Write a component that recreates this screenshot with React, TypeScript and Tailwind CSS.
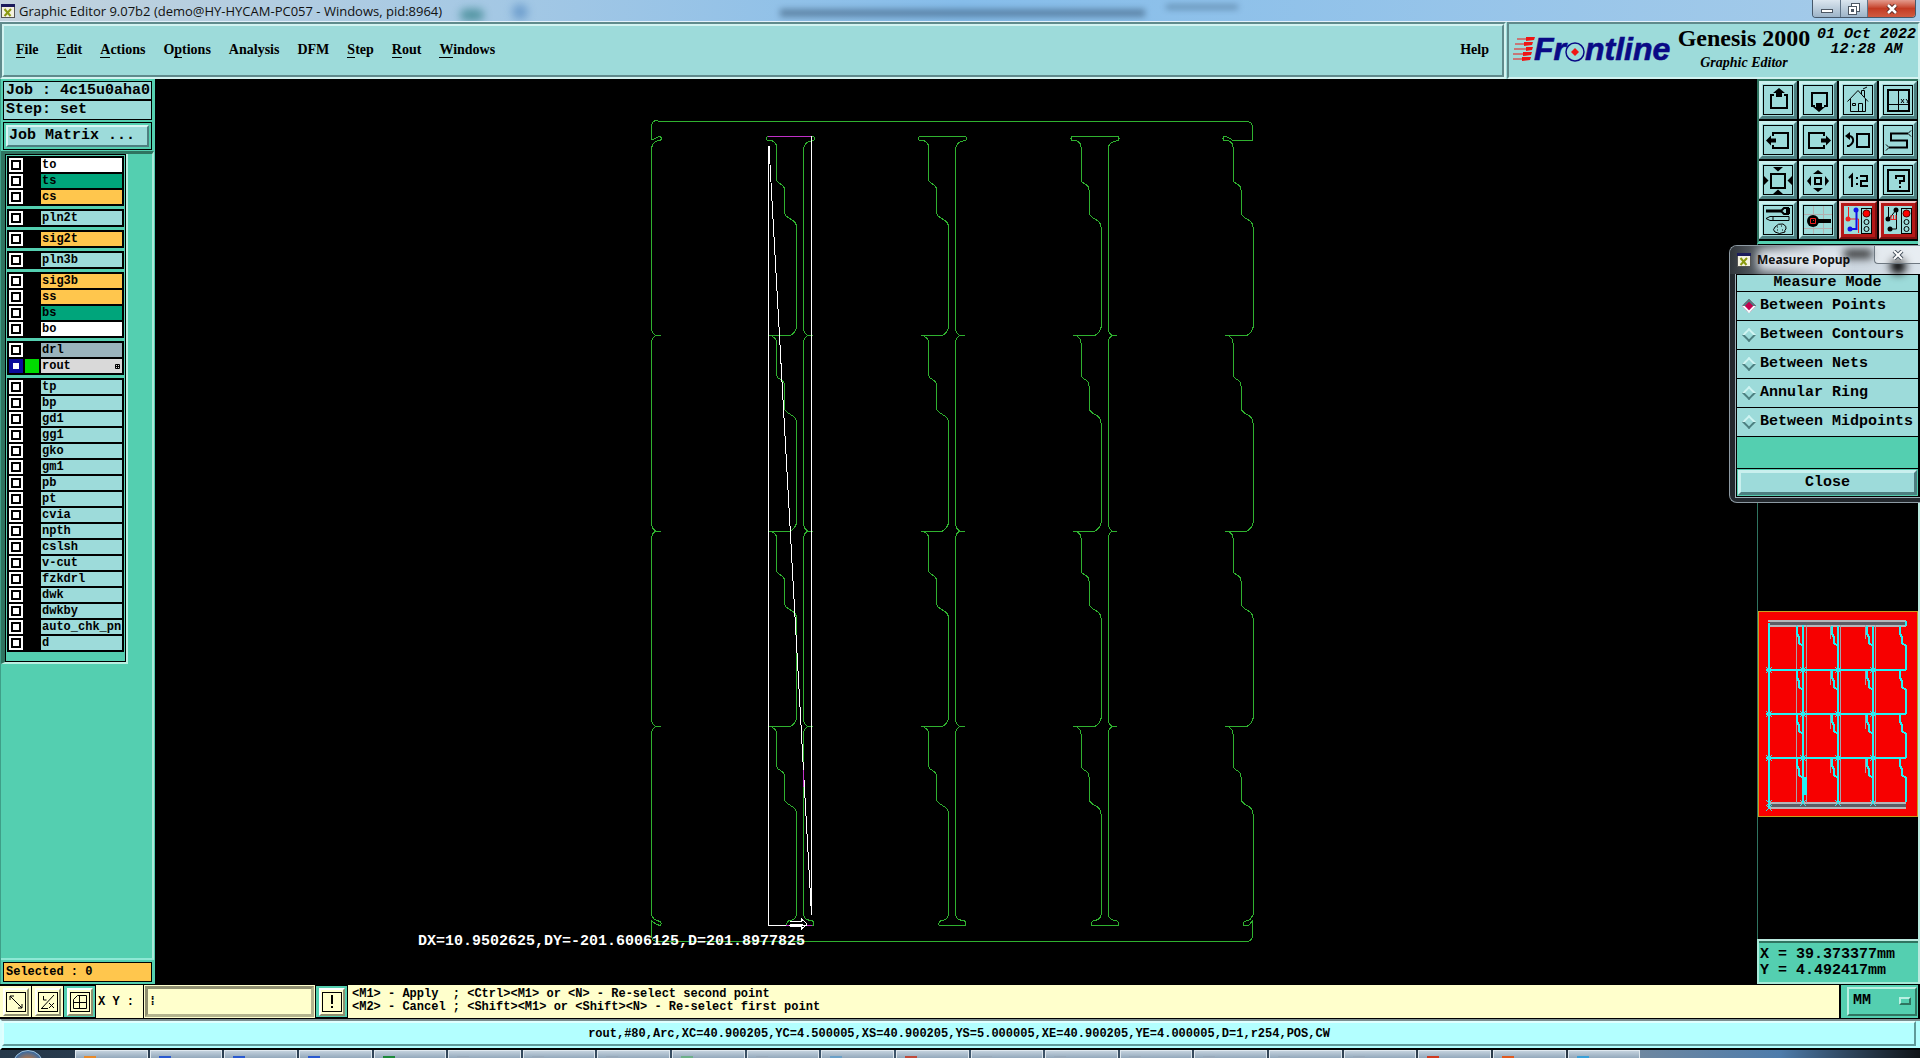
import React, { useState } from 'react';
import clsx from 'clsx';

type Layer = { name: string; color: string; active?: boolean };

const CYAN = 'bg-[#9ddbda]';
const ORANGE = 'bg-[#ffc64d]';
const GREEN = 'bg-[#00a57b]';
const WHITE = 'bg-white';

const layerGroups: Layer[][] = [
  [
    { name: 'to', color: WHITE },
    { name: 'ts', color: GREEN },
    { name: 'cs', color: ORANGE },
  ],
  [{ name: 'pln2t', color: CYAN }],
  [{ name: 'sig2t', color: ORANGE }],
  [{ name: 'pln3b', color: CYAN }],
  [
    { name: 'sig3b', color: ORANGE },
    { name: 'ss', color: ORANGE },
    { name: 'bs', color: GREEN },
    { name: 'bo', color: WHITE },
  ],
  [
    { name: 'drl', color: 'bg-[#9ab3bc]' },
    { name: 'rout', color: 'bg-[#d9d9d9]', active: true },
  ],
  ['tp', 'bp', 'gd1', 'gg1', 'gko', 'gm1', 'pb', 'pt', 'cvia', 'npth', 'cslsh', 'v-cut', 'fzkdrl', 'dwk', 'dwkby', 'auto_chk_pnl', 'd'].map(
    (name) => ({ name, color: CYAN })
  ),
];

// [label, index of the underlined letter]
const menus: [string, number][] = [
  ['File', 0],
  ['Edit', 0],
  ['Actions', 0],
  ['Options', 1],
  ['Analysis', -1],
  ['DFM', -1],
  ['Step', 0],
  ['Rout', 0],
  ['Windows', 0],
];

const measureModes = ['Between Points', 'Between Contours', 'Between Nets', 'Annular Ring', 'Between Midpoints'];

const XIcon = () => (
  <svg viewBox="0 0 14 14" className="size-[14px] shrink-0">
    <rect x="0.5" y="0.5" width="13" height="13" fill="#f4f2df" stroke="#555" />
    <rect x="0" y="0" width="14" height="3" fill="#1b1b5c" />
    <path d="M3.5 5l6 7M10 5l-6.500 7" stroke="#8a9a10" strokeWidth="2" />
  </svg>
);

const TitleBar = () => (
  <header className="relative flex h-[22px] shrink-0 items-center justify-between overflow-hidden bg-gradient-to-r from-[#c3d3dd] via-[#86bdea] to-[#a5cbe9] border-b border-[#e4f1fa]">
    <div className="absolute left-[460px] top-[9px] h-3 w-6 rounded-full bg-[#2f7f86] opacity-70 blur-[4px]" />
    <div className="absolute left-[512px] top-1 h-4 w-4 rounded-full bg-[#4f86c0] opacity-60 blur-[4px]" />
    <div className="absolute left-[780px] top-[9px] h-2 w-[365px] bg-[#3d5e7c] opacity-60 blur-[3px]" />
    <div className="absolute left-[1166px] top-[5px] h-1 w-[72px] bg-[#3d5e7c] opacity-60 blur-[3px]" />
    <div className="relative flex items-center gap-1 pl-px font-['Open_Sans','Noto_Sans',sans-serif] text-[13px] leading-5 text-[#111]">
      <XIcon />
      <span>Graphic Editor 9.07b2 (demo@HY-HYCAM-PC057 - Windows, pid:8964)</span>
    </div>
    <div className="relative mr-1 flex h-[18px] self-start overflow-hidden rounded-b border border-t-0 border-[#46586a]">
      <button aria-label="Minimize" className="flex w-7 items-center justify-center border-r border-[#5f7488] bg-gradient-to-b from-[#dbe6ef] to-[#9db4c8]">
        <span className="mt-1 h-1 w-3 border border-[#4c5763] bg-white" />
      </button>
      <button aria-label="Restore" className="flex w-[27px] items-center justify-center border-r border-[#5f7488] bg-gradient-to-b from-[#dbe6ef] to-[#9db4c8]">
        <svg viewBox="0 0 12 12" className="size-3" fill="#fff" stroke="#4c5763">
          <rect x="3.500" y="0.500" width="8" height="8" />
          <rect x="0.500" y="3.500" width="8" height="8" />
          <rect x="3.500" y="6.500" width="2" height="2" fill="#4c5763" />
        </svg>
      </button>
      <button aria-label="Close" className="flex w-[47px] items-center justify-center bg-gradient-to-b from-[#e39a8d] via-[#c33b23] to-[#d05a40]">
        <svg viewBox="0 0 12 10" className="h-[10px] w-3">
          <path d="M2 1l8 8M10 1l-8 8" stroke="#5b2a25" strokeWidth="4.500" />
          <path d="M2 1l8 8M10 1l-8 8" stroke="#fff" strokeWidth="2.500" />
        </svg>
      </button>
    </div>
  </header>
);

const FrontlineLogo = () => (
  <svg viewBox="0 -6 160 44" className="h-11 w-40 shrink-0" role="img" aria-label="Frontline">
    <g stroke="#f01414" strokeWidth="1">
      <path d="M4 5h12M2 10h14M1 15h14M0 20h14M0 25h14" />
    </g>
    <g fill="#f01414">
      <path d="M13 3h9l-1 3-8 1zM11 8h9l-1 3-8 1zM13 13h7l-1 3-6 1zM10 18h9l-1 3-8 1zM9 23h9l-1 3-8 1z" />
    </g>
    <g
      fill="#0a0a86"
      stroke="#0a0a86"
      strokeWidth="0.600"
      fontFamily="Liberation Sans, Arial, sans-serif"
      fontWeight="bold"
      fontStyle="italic"
      fontSize="32"
    >
      <text x="21" y="26">Fr</text>
      <text x="72" y="26">ntline</text>
    </g>
    <circle cx="62" cy="18" r="9" fill="#9ddbda" stroke="#0a0a86" strokeWidth="1.500" />
    <path d="M62 14l4 4-4 4-4-4z" fill="#f01414" />
  </svg>
);

const MenuBar = () => (
  <div className="flex h-[57px] shrink-0 bg-[#9ddbda] font-['Liberation_Serif',serif] font-bold">
    <div className="flex-1 border-2 border-b-[#d3f3f1] border-l-[#5f8a8c] border-r-[#d3f3f1] border-t-[#5f8a8c]">
      <nav className="flex h-full items-center justify-between border-2 border-b-[#5f8a8c] border-l-[#d3f3f1] border-r-[#5f8a8c] border-t-[#d3f3f1] pb-[2px] pl-3 pr-[13px] text-[14px]">
        <div className="flex gap-[18px]">
          {menus.map(([label, u]) => (
            <button key={label} className="leading-4">
              {u < 0 ? (
                label
              ) : (
                <>
                  {label.slice(0, u)}
                  <span className="border-b border-black">{label[u]}</span>
                  {label.slice(u + 1)}
                </>
              )}
            </button>
          ))}
        </div>
        <button className="leading-4">Help</button>
      </nav>
    </div>
    <div className="ml-px flex w-[413px] gap-[3px] border-2 border-b-[#d3f3f1] border-l-[#5f8a8c] border-r-[#d3f3f1] border-t-[#5f8a8c] pl-1">
      <div className="pt-1">
        <FrontlineLogo />
      </div>
      <div className="flex w-[136px] flex-col items-center">
        <div className="whitespace-nowrap text-[24px] leading-[28px]">Genesis 2000</div>
        <div className="text-[14px] italic leading-[22px]">Graphic Editor</div>
      </div>
      <div className="flex-1 pt-[3px] text-center font-['Liberation_Mono',monospace] text-[15px] italic leading-[15px]">
        <div className="whitespace-nowrap">01 Oct 2022</div>
        <div>12:28 AM</div>
      </div>
    </div>
  </div>
);

const LayerRow = ({ layer }: { layer: Layer }) => (
  <label className="flex h-[14px] gap-px">
    <span className={clsx('flex w-[14px] shrink-0 items-center justify-center', layer.active ? 'bg-[#0c0c9c]' : 'bg-white')}>
      <input
        type="checkbox"
        defaultChecked={layer.active}
        className="size-[10px] appearance-none border-2 border-black bg-white checked:border-[#0c0c9c]"
      />
    </span>
    <span className={clsx('mx-px w-[14px] shrink-0', layer.active ? 'bg-[#00dc00]' : 'bg-black')} />
    <span className={clsx('flex min-w-0 flex-1 items-center justify-between overflow-hidden pl-px text-[12px] leading-[14px]', layer.color)}>
      {layer.name}
      {layer.active && (
        <svg viewBox="0 0 5 5" className="mr-[2px] size-[5px]" stroke="#000" fill="none">
          <path d="M0.500 0.500h4v4h-4zM2.500 0v5M0 2.500h5" />
        </svg>
      )}
    </span>
  </label>
);

const LeftPanel = () => (
  <aside className="flex w-[155px] shrink-0 flex-col border-x border-[#54cfb0] border-l-[#3f9f88] bg-[#54cfb0] px-[2px] pt-[2px]">
    <div className="border border-black bg-[#9ddbda] pl-[2px] text-[15px] leading-[17px]">Job : 4c15u0aha0</div>
    <div className="border border-black bg-[#9ddbda] pl-[2px] text-[15px] leading-[18px]">Step: set</div>
    <div className="mt-[2px] border border-black p-[2px]">
      <button className="block h-[22px] w-full border-2 border-b-[#4d7f80] border-l-[#d8f6f4] border-r-[#4d7f80] border-t-[#d8f6f4] bg-[#9ddbda] pl-px text-left text-[15px] leading-[18px]">
        Job Matrix ...
      </button>
    </div>
    <div className="-mx-[2px] mt-px flex flex-1 flex-col border-b-2 border-r-2 border-t-[3px] border-b-[#8fe8d4] border-r-[#a8ead9] border-t-[#2f7460]">
      <div className="w-[127px] border-b-2 border-l-4 border-r-2 border-b-[#b9f0e2] border-l-[#2f7460] border-r-[#b9f0e2]">
        <div className="flex flex-col gap-[3px] border border-black px-px pb-[9px] pt-px">
          {layerGroups.map((group) => (
            <div key={group[0].name} className="flex flex-col gap-[2px] bg-black p-[2px]">
              {group.map((layer) => (
                <LayerRow key={layer.name} layer={layer} />
              ))}
            </div>
          ))}
        </div>
      </div>
    </div>
    <div className="mb-[2px] mt-[2px] h-5 border border-black bg-[#ffc64d] pl-[2px] text-[12px] leading-[18px]">Selected : 0</div>
  </aside>
);

// Rows of the panel repeat every 195.5 units
const ROW_ENDS = [335.5, 531, 726.5];
const ROW_TOPS = [140, 335.5, 531, 726.5];

// Stepped edge on the right of a board, one segment for each row
const steppedEdge = (x: number) =>
  ROW_TOPS.map((y, i) => {
    const top = `M${x - 4} ${y + 1}q4 2 4 6V${y + 39}q0 3 4 5q4 2 4 6V${y + 72}q0 4 6 7q6 3 6 8`;
    if (i === 3) return `${top}V915`;
    const end = ROW_ENDS[i];
    return `${top}V${end - 8}q-1 5 -6 8h-22`;
  }).join('');

// Straight edge with a small mouse-bite tick between rows
const straightEdge = (x: number) => {
  let d = `M${x} 148`;
  ROW_ENDS.forEach((y) => {
    d += `V${y - 6}q1 4 4 6h5h-5q-3 2 -4 6`;
  });
  return `${d}V915`;
};

const slot = (x: number) =>
  [
    `M${x - 9} 136.500h46q2 2 0 4q-9 1 -10 8`,
    `M${x - 9} 136.500q-2 2 0 4h5`,
    steppedEdge(x),
    straightEdge(x + 27),
    `M${x + 20} 915q-1 5 -8 6q-3 2 -1 4.500h26q1 -3 -1 -4.500q-8 -1 -9 -6`,
  ].join('');

const outline = [
  // frame top
  'M651.500 140V125q1 -4 5 -4.500L660 121.500H1246q6 0 6.500 5V140.500H1233q-5 -4 -9 -4q-2 2 0 4h5',
  'M651.500 140l8 -3.500q3 1 1 4q-8 0 -9 8',
  straightEdge(651.5),
  steppedEdge(1233),
  // frame bottom
  'M651.500 915q2 5 7 6q4 1 2 4.500l-4 -1l-5 -3.500V937q1 4 5 4.500H1247q5 -1 5.500 -5V921l-4 4.500h-5q-1 -4 3 -4.500q5 -1 6 -6',
].join('');

const Canvas = () => (
  <main className="min-w-0 flex-1 bg-black">
    <svg viewBox="155 79 1602 905" className="h-full w-full" fill="none" shapeRendering="crispEdges">
      <g stroke="#2fb12f">
        <path d={outline} />
        {[776.5, 928.5, 1081].map((x) => (
          <path key={x} d={slot(x)} />
        ))}
      </g>
      <g stroke="#fff">
        <path d="M768.500 146V925.500H812M811.500 136V915M769 146L811.500 915" />
      </g>
      <path d="M768 136.500h43M803.500 770v17M786 925.500h3M807 925.500h5" stroke="#c030c8" />
      <path d="M790 921.500h11v-3l6 5.500-6 5.500v-3h-11M790 924h13" stroke="#fff" />
      <text x="418" y="945" fill="#fff" fontSize="15" fontWeight="bold">
        DX=10.9502625,DY=-201.6006125,D=201.8977825
      </text>
    </svg>
  </main>
);

const trafficLight = (
  <>
    <rect x="18.500" y="3.500" width="10" height="25" stroke="#000" />
    <circle cx="23.500" cy="8.500" r="3.500" fill="#f00" stroke="#500" />
    <circle cx="23.500" cy="17" r="2.500" stroke="#000" />
    <circle cx="23.500" cy="24" r="2.500" stroke="#000" />
  </>
);

const tools: { label: string; red?: boolean; art: React.ReactNode }[] = [
  {
    label: 'Pan up',
    art: (
      <>
        <path d="M11 10H8v13h16V10h-3" stroke="#000" strokeWidth="2" />
        <path d="M16 3l6 5h-3v4h-6V8h-3z" fill="#000" />
      </>
    ),
  },
  {
    label: 'Pan down',
    art: (
      <>
        <path d="M12 21H9V8h15v13h-3" stroke="#000" strokeWidth="2" />
        <path d="M16 27l6-5h-3v-4h-6v4h-3z" fill="#000" />
      </>
    ),
  },
  {
    label: 'Home',
    art: (
      <path
        d="M4.500 16.500l10.500-11 10 11M7.500 14v12.500h15V14M18.500 9V5.500h3V12M20 4l4-2M9.500 18.500h3v2h-3zM15.500 27v-8.500h4V27"
        stroke="#000"
      />
    ),
  },
  {
    label: 'Zoom XY',
    art: (
      <>
        <rect x="5" y="5" width="21" height="21" stroke="#000" strokeWidth="2" />
        <path d="M15.500 5v21M5 19.500h21" stroke="#000" />
        <path d="M18 14l3 4M21 14l-3 4M23 14l1.500 2M26 14l-2 4" stroke="#000" />
      </>
    ),
  },
  {
    label: 'Pan left',
    art: (
      <>
        <path d="M10 11V8h15v15H10v-3" stroke="#000" strokeWidth="2" />
        <path d="M3 15.500l5-5v3h5v4H8v3z" fill="#000" />
      </>
    ),
  },
  {
    label: 'Pan right',
    art: (
      <>
        <path d="M21 11V8H6v15h15v-3" stroke="#000" strokeWidth="2" />
        <path d="M28 15.500l-5-5v3h-5v4h5v3z" fill="#000" />
      </>
    ),
  },
  {
    label: 'Previous view',
    art: (
      <>
        <rect x="14" y="9" width="12" height="13" stroke="#000" strokeWidth="2" />
        <path d="M4 21h2q5-3 4-7q-1-3-4-3" stroke="#000" strokeWidth="2" />
        <path d="M2 11l5-4v8z" fill="#000" />
      </>
    ),
  },
  {
    label: 'Snake',
    art: (
      <>
        <path d="M25 8.500H8v7h16v7H6" stroke="#000" strokeWidth="2" />
        <path d="M28 5.500l-3 3 3 3M3 19.500l3 3-3 3" stroke="#000" />
      </>
    ),
  },
  {
    label: 'Zoom in',
    art: (
      <>
        <rect x="8" y="9" width="14" height="14" stroke="#000" strokeWidth="2" />
        <path d="M10 2h10l-5 4.500zM10 29h10l-5-4.500zM1 11v9l4.500-4.500zM29 11v9l-4.500-4.500z" fill="#000" />
      </>
    ),
  },
  {
    label: 'Zoom out',
    art: (
      <>
        <rect x="12" y="13" width="6" height="6" stroke="#000" strokeWidth="2" />
        <path d="M10 9h10l-5-4zM10 23h10l-5 4zM8 11v10l-4-5zM22 11v10l4-5z" fill="#000" />
      </>
    ),
  },
  {
    label: 'Scale 1:2',
    art: <path d="M6 13l3-3v12M14 12v2M14 18v2M17 11h7v5h-6v5h7" stroke="#000" strokeWidth="2" />,
  },
  {
    label: 'Help on tool',
    art: (
      <>
        <rect x="5" y="5" width="21" height="21" stroke="#000" strokeWidth="2" />
        <path d="M13 14v-3h8v5h-4v3M17 21v2" stroke="#000" strokeWidth="2" />
      </>
    ),
  },
  {
    label: 'Options',
    art: (
      <>
        <path d="M3 6h15" stroke="#000" strokeWidth="3" />
        <path d="M26 3h-5l-3 3 3 3h5M26 3v2h-3M26 9V7h-3" stroke="#000" strokeWidth="2" />
        <path d="M3 13.500l4-2h19v4H7zM10 11v4" stroke="#000" />
        <path d="M12 22q3-4 8-3q4 2 3 5q-2 1-1 3q-6 3-10 0q-3-2 0-5zM14 22h1M18 21h1M14 25h1M19 25h1" stroke="#000" />
      </>
    ),
  },
  {
    label: 'Magnify',
    art: (
      <>
        <path d="M10.500 1v28M20.500 1v28M1 9.500h28M1 23.500h28" stroke="#b3aeb0" />
        <circle cx="10" cy="16" r="6" fill="#000" />
        <path d="M15 16h13" stroke="#000" strokeWidth="4" />
        <path d="M7.500 13.500h5v5h-5zM10 15.500h1" stroke="#f02020" />
      </>
    ),
  },
  {
    label: 'Select net',
    red: true,
    art: (
      <>
        <path d="M5.500 2v12h10v14" stroke="#f02020" />
        <circle cx="5" cy="14" r="2.500" fill="#f02020" />
        <path d="M13.500 5v19H7" stroke="#1212e8" strokeWidth="2" />
        <circle cx="13" cy="5" r="2.500" fill="#1212e8" />
        <circle cx="7" cy="24" r="2.500" fill="#1212e8" />
        {trafficLight}
      </>
    ),
  },
  {
    label: 'Select trace',
    red: true,
    art: (
      <>
        <path d="M5.500 2v12M13.500 5v19H7M6 14l7-9" stroke="#000" />
        <circle cx="13" cy="5" r="2.500" fill="#000" />
        <circle cx="5" cy="14" r="2.500" fill="#000" />
        <circle cx="7" cy="24" r="2.500" fill="#000" />
        <path d="M8 10v5M10.500 10v5M13 10v5M8 14.500h5" stroke="#f02020" />
        {trafficLight}
      </>
    ),
  },
];

const ToolGrid = () => (
  <div className="grid grid-cols-4 gap-[2px] border-b-[3px] border-l-2 border-t-2 border-b-[#54cfb0] border-l-[#2f7460] border-t-[#2f7460] bg-black pb-[2px] pr-px">
    {tools.map((tool) => (
      <button
        key={tool.label}
        aria-label={tool.label}
        className={clsx(
          'flex h-[38px] items-start justify-start border-[3px] bg-[#9ddbda] pl-px pt-px',
          tool.red
            ? 'border-b-[#7c1010] border-l-[#eec4c4] border-r-[#7c1010] border-t-[#eec4c4] outline-2 -outline-offset-4 outline-[#b51818]'
            : 'border-b-[#4d7f80] border-l-[#c9f0ee] border-r-[#4d7f80] border-t-[#c9f0ee]'
        )}
      >
        <svg viewBox="0 0 30 30" className="size-[30px] shrink-0" fill="none">
          <rect x="0.500" y="0.500" width="29" height="29" stroke={tool.red ? '#b51818' : '#000'} />
          {tool.art}
        </svg>
      </button>
    ))}
  </div>
);

const GRID_Y = [59, 103, 147];
const miniStep = (x: number, y: number) => `M${x} ${y}v8l2 3v6l4 3`;

const Overview = () => (
  <svg viewBox="0 0 160 206" className="w-full" fill="none" shapeRendering="crispEdges">
    <rect x="0.500" y="0.500" width="159" height="205" fill="#f70000" stroke="#c8a020" />
    <path d="M10 10h138M10 15h138M10 192h138M10 197h138" stroke="#b4b6ba" strokeWidth="2" />
    <path d="M12 12.500h136M12 194.500h136" stroke="#5c5c64" strokeWidth="3" />
    <path d="M38 14v178M48 14v178M82 14v178M117 14v178" stroke="#a8a0a8" />
    <path d="M72 14v14M107 14v14M72 60v14M107 60v14M72 104v14M107 104v14M72 148v14M107 148v14" stroke="#a8a0a8" />
    <g stroke="#25f0f4" strokeWidth="2">
      <path d="M11 12v185M45 14v178M80 15v177M115 15v177" />
      {GRID_Y.map((y) => (
        <path key={y} d={`M8 ${y}h140`} />
      ))}
      {[15, 59, 103, 147].map((y) => (
        <React.Fragment key={y}>
          <path d={`${miniStep(39, y)}`} />
          <path d={`${miniStep(74, y)}V${y + 44}`} />
          <path d={`${miniStep(109, y)}V${y + 44}`} />
          <path d={`${miniStep(142, y)}V${y + 44}`} />
        </React.Fragment>
      ))}
      <path d="M46.500 166v18" strokeWidth="4" />
      <path d="M148 10v5" />
    </g>
    <g stroke="#35e3ea">
      {[11, 45, 80, 115].map((x) =>
        [...GRID_Y, 192].map((y) => <path key={`${x}-${y}`} d={`M${x - 3} ${y - 3}l6 6m0 -6l-6 6`} />)
      )}
      <path d="M8 194l6 6m0 -6l-6 6" />
    </g>
  </svg>
);

const RightPanel = () => (
  <aside className="flex w-[163px] shrink-0 flex-col border-r-2 border-[#b9e9de] bg-black">
    <ToolGrid />
    <div className="flex flex-1 flex-col justify-end border-l border-[#2f7460]">
      <Overview />
      <div className="h-[122px]" />
    </div>
    <div className="h-[45px] border-b-2 border-l-2 border-t-2 border-b-[#a8ead9] border-l-[#a8ead9] border-t-[#b9e9de] bg-[#54cfb0]">
      <div className="border-t-2 border-[#2f7460] pl-px pt-1 text-[15px] leading-[16px]">
        <div className="whitespace-pre">X = 39.373377mm</div>
        <div className="whitespace-pre">Y = 4.492417mm</div>
      </div>
    </div>
  </aside>
);

const MeasurePopup = () => {
  const [mode, setMode] = useState('Between Points');

  return (
    <section className="absolute right-0 top-[245px] w-[191px] overflow-hidden rounded-l-lg border border-r-0 border-[#8d9aa3] bg-[#23282d] pb-1 pl-[5px]">
      <div className="relative -ml-[5px] flex h-7 items-center gap-[6px] bg-gradient-to-r from-[#30353a] via-[#c9d3dc] to-[#d9e2ea] pl-[7px]">
        <div className="absolute left-7 top-1 h-5 w-[88px] bg-[#e3e9f0] blur-[5px]" />
        <div className="absolute left-[114px] top-1 h-2 w-7 bg-[#222] blur-[4px]" />
        <div className="absolute left-[160px] top-3 h-4 w-4 rounded-full bg-black blur-[4px]" />
        <div className="relative">
          <XIcon />
        </div>
        <h2 className="relative font-['Open_Sans','Noto_Sans',sans-serif] text-[12px] text-[#111]">Measure Popup</h2>
        <button
          aria-label="Close popup"
          className="absolute right-0 top-0 flex h-[18px] w-[46px] items-center justify-center rounded-bl border-b border-l border-[#6d7780] bg-white/40"
        >
          <svg viewBox="0 0 12 10" className="h-[10px] w-3">
            <path d="M2 1l8 8M10 1l-8 8" stroke="#4c5763" strokeWidth="4" />
            <path d="M2 1l8 8M10 1l-8 8" stroke="#fff" strokeWidth="2" />
          </svg>
        </button>
      </div>
      <div className="border-b border-l border-[#9fb0b8]">
        <div className="border border-r-2 border-black bg-[#54cfb0] text-[15px] font-bold">
          <div className="bg-[#9ddbda] text-center leading-4">Measure Mode</div>
          <div className="flex flex-col gap-px bg-black py-px">
            {measureModes.map((m) => (
              <label key={m} className="flex h-7 items-center gap-[6px] whitespace-nowrap bg-[#9ddbda] pl-[7px]">
                <input
                  type="radio"
                  name="measure-mode"
                  checked={mode === m}
                  onChange={() => setMode(m)}
                  className="size-[10px] shrink-0 rotate-45 appearance-none border-2 border-b-[#4d7f80] border-l-[#d0f4f2] border-r-[#4d7f80] border-t-[#d0f4f2] checked:border-b-[#f4ffff] checked:border-l-[#4d7f80] checked:border-r-[#f4ffff] checked:border-t-[#4d7f80] checked:bg-[#c4004f]"
                />
                {m}
              </label>
            ))}
          </div>
          <div className="h-[31px]" />
          <div className="border-t border-black p-px">
            <button className="block h-[25px] w-full border-[3px] border-b-[#4d7f80] border-l-[#c9f0ee] border-r-[#4d7f80] border-t-[#c9f0ee] bg-[#9ddbda] leading-[18px]">
              Close
            </button>
          </div>
        </div>
      </div>
    </section>
  );
};

const PromptButton = ({ label, green, children }: { label: string; green?: boolean; children: React.ReactNode }) => (
  <button
    aria-label={label}
    className={clsx(
      'flex w-8 items-center justify-center border border-l-0 border-black',
      green ? 'bg-[#54cfb0]' : 'bg-[#ffffcc]'
    )}
  >
    <span className="flex h-7 w-[26px] items-center justify-center border-2 border-b-[#8f8f70] border-l-white border-r-[#8f8f70] border-t-white bg-[#ffffcc]">
      <svg viewBox="0 0 20 20" className="h-5 w-5" fill="none" stroke="#000">
        <rect x="0.500" y="0.500" width="19" height="19" />
        {children}
      </svg>
    </span>
  </button>
);

const PromptBar = () => (
  <div className="flex h-[33px] shrink-0 bg-[#ffffcc] text-[12px]">
    <PromptButton label="Snap direction">
      <path d="M4 4l12 12M4 8V4h4M16 12v4h-4" />
    </PromptButton>
    <PromptButton label="Relative mode">
      <path d="M3.500 16.500L16 3M3 16.500h7M5.500 4v4h3M11 11l5 5M16 11l-5 5" />
    </PromptButton>
    <PromptButton label="Grid" green>
      <path d="M3.500 16.500v-9l4-4h9v13zM9.500 3.500v13M3.500 10.500h13" />
    </PromptButton>
    <label htmlFor="xy" className="flex w-[47px] items-center whitespace-pre pl-[2px] leading-4">
      X Y :
    </label>
    <div className="flex w-[173px] border-x border-black p-px">
      <input
        id="xy"
        type="text"
        className="w-full border-[3px] border-b-[#b4b48e] border-l-[#8f8f70] border-r-[#b4b48e] border-t-[#8f8f70] bg-[#ffffcc] px-px outline-none placeholder:text-black"
        placeholder="⁞"
      />
    </div>
    <PromptButton label="Interrupt" green>
      <path d="M10 3v9M10 14v2" strokeWidth="2" />
    </PromptButton>
    <div className="flex flex-1 flex-col justify-center whitespace-pre pl-1 pb-px leading-[13px]">
      <div>{'<M1> - Apply  ; <Ctrl><M1> or <N> - Re-select second point'}</div>
      <div>{'<M2> - Cancel ; <Shift><M1> or <Shift><N> - Re-select first point'}</div>
    </div>
    <div className="w-[81px] border-l-2 border-r-2 border-black bg-[#54cfb0] py-[2px] pl-[6px] pr-px">
      <div className="relative h-full">
        <select
          aria-label="Units"
          className="h-full w-full appearance-none border-2 border-b-[#2f7460] border-l-[#b9f0e2] border-r-[#2f7460] border-t-[#b9f0e2] pl-1 text-[15px] font-bold outline-none"
        >
          <option>MM</option>
        </select>
        <span className="pointer-events-none absolute right-[6px] top-[10px] h-2 w-3 border-2 border-b-[#2f7460] border-l-[#b9f0e2] border-r-[#2f7460] border-t-[#b9f0e2]" />
      </div>
    </div>
  </div>
);

const StatusBar = () => (
  <footer className="mt-px h-[31px] shrink-0 border-b-2 border-l-2 border-t-2 border-b-black border-l-[#d9ffff] border-t-[#7b8f90] bg-[#b3ffff] pb-[2px] pr-1">
    <div className="h-full border-2 border-b-[#5f9a9a] border-l-[#e0ffff] border-r-[#5f9a9a] border-t-[#e0ffff] text-center text-[12px] leading-[22px]">
      rout,#80,Arc,XC=40.900205,YC=4.500005,XS=40.900205,YS=5.000005,XE=40.900205,YE=4.000005,D=1,r254,POS,CW
    </div>
  </footer>
);

const taskTints = ['#e88a2a', '#2a5ad0', '#2a5ad0', '#2a5ad0', '#1e8a3c', '#9ab', '#9ab', '#9ab', '#6db08a', '#9ab', '#6aa0c8', '#c04a3a', '#9ab', '#9ab', '#9ab', '#9ab', '#9ab', '#9ab', '#d03a20', '#e05a20', '#3aa0d8'];

const Taskbar = () => (
  <div className="flex h-2 shrink-0 overflow-hidden bg-gradient-to-r from-[#26384a] via-[#3f566c] to-[#1c2630]">
    <div className="flex w-[75px] justify-center overflow-hidden pr-5">
      <div className="size-8 rounded-full border border-[#9fc0da] bg-[radial-gradient(circle,#e07a2a_20%,#3a6aa0_70%)]" />
    </div>
    <div className="flex flex-1 gap-[2px]">
      {taskTints.map((tint, i) => (
        <div key={i} className="flex-1 border border-b-0 border-[#dfe8ef] bg-gradient-to-b from-[#c3d1dd] to-[#93a8bb] pl-2">
          <div className="mt-[5px] h-[2px] w-3" style={{ background: tint }} />
        </div>
      ))}
    </div>
    <div className="w-[280px] bg-gradient-to-r from-[#6e87a0] via-[#4e7cab] to-[#101418]" />
  </div>
);

export default function App() {
  return (
    <div className="relative flex h-screen w-full flex-col overflow-hidden bg-black font-['Liberation_Mono','DejaVu_Sans_Mono',monospace] font-bold text-black">
      <div className="font-normal">
        <TitleBar />
      </div>
      <MenuBar />
      <div className="flex min-h-0 flex-1 pb-px">
        <LeftPanel />
        <Canvas />
        <RightPanel />
      </div>
      <PromptBar />
      <StatusBar />
      <Taskbar />
      <MeasurePopup />
    </div>
  );
}
